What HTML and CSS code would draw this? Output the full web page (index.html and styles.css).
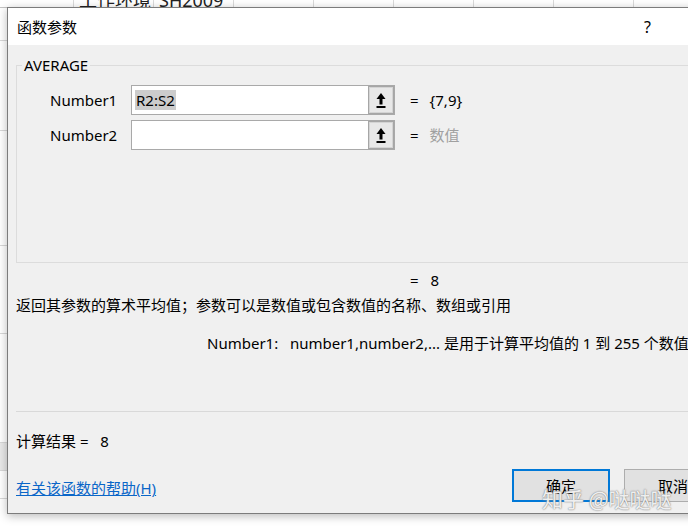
FILE: index.html
```html
<!DOCTYPE html>
<html lang="zh-CN">
<head>
<meta charset="utf-8">
<title>函数参数</title>
<link rel="stylesheet" href="styles.css">
</head>
<body>
<div class="sheet">
  <div class="row r0">
    <div class="cell first"></div>
    <div class="cell"><span class="celltext">工作环境</span></div>
    <div class="cell"><span class="celltext">SH2009</span></div>
    <div class="cell"></div>
    <div class="cell"></div>
    <div class="cell"></div>
    <div class="cell"></div>
    <div class="cell"></div>
    <div class="cell"></div>
  </div>
  <div class="row r1"></div>
  <div class="row r2"></div>
  <div class="row r3"></div>
  <div class="row r4"></div>
  <div class="row r5"></div>
  <div class="row r6"></div>
  <div class="row r7"></div>
  <div class="row r8"></div>
</div>

<div class="dialog">
  <div class="titlebar">
    <span class="title">函数参数</span>
    <span class="qmark">?</span>
  </div>
  <div class="dbody">
    <fieldset class="group">
      <legend class="legend">AVERAGE</legend>
      <div class="arg">
        <span class="label">Number1</span>
        <div class="field">
          <span class="text"><span class="sel">R2:S2</span></span>
          <span class="pick"><svg width="10" height="17" viewBox="0 0 10 17"><path d="M5 1 L9.5 7 H0.5 Z" fill="#000"/><rect x="3.5" y="6.5" width="3" height="6" fill="#000"/><rect x="0.5" y="14" width="9" height="2" fill="#000"/></svg></span>
        </div>
        <span class="eq">=</span>
        <span class="val">{7,9}</span>
      </div>
      <div class="arg">
        <span class="label">Number2</span>
        <div class="field">
          <span class="text"></span>
          <span class="pick"><svg width="10" height="17" viewBox="0 0 10 17"><path d="M5 1 L9.5 7 H0.5 Z" fill="#000"/><rect x="3.5" y="6.5" width="3" height="6" fill="#000"/><rect x="0.5" y="14" width="9" height="2" fill="#000"/></svg></span>
        </div>
        <span class="eq">=</span>
        <span class="val hint">数值</span>
      </div>
    </fieldset>
    <div class="fresult"><span>=</span><span class="num">8</span></div>
    <div class="desc">返回其参数的算术平均值；参数可以是数值或包含数值的名称、数组或引用</div>
    <div class="help">Number1:&nbsp;&nbsp;&nbsp;number1,number2,... 是用于计算平均值的 1 到 255 个数值或包含数值的名称、数组或引用</div>
    <div class="sep"></div>
    <div class="calc">计算结果 =&nbsp;&nbsp;&nbsp;8</div>
    <div class="footer">
      <a class="link" href="#">有关该函数的帮助(H)</a>
      <button class="btn ok">确定</button>
      <button class="btn cancel">取消</button>
    </div>
  </div>
</div>

<div class="watermark">知乎 @哒哒哒</div>
</body>
</html>
```

FILE: styles.css
```css
* { box-sizing: border-box; }

html, body {
  margin: 0;
  padding: 0;
  width: 688px;
  height: 530px;
  overflow: hidden;
  background: #ffffff;
  font-family: "Noto Sans", "Noto Sans CJK SC", sans-serif;
}

body { position: relative; }

/* background spreadsheet */
.sheet {
  display: flex;
  flex-direction: column;
  width: 688px;
}
.row {
  border-bottom: 1px solid #d8d8d8;
  width: 100%;
}
.r0 {
  display: flex;
  height: 8px;
  border-bottom-color: #c4c4c4;
}
.r1 { height: 33px; }
.r2 { height: 90px; }
.r3 { height: 115px; }
.r4 { height: 88px; }
.r5 { height: 109px; }
.r6 { height: 28px; background: #e9e9e9; }
.r7 { height: 28px; }
.r8 { height: 40px; border-bottom: none; }

.cell {
  flex: 0 0 80px;
  height: 7px;
  border-left: 1px solid #dadada;
  overflow: hidden;
  display: flex;
  align-items: flex-end;
  padding-left: 5px;
}
.cell.first {
  flex-basis: 73px;
  border-left: none;
}
.celltext {
  font-size: 18px;
  line-height: 20px;
  margin-bottom: -3px;
  color: #222;
  white-space: nowrap;
}

/* dialog */
.dialog {
  position: absolute;
  left: 7px;
  top: 7px;
  width: 720px;
  height: 507px;
  border: 1px solid #7c7c7c;
  background: #f0f0f0;
  box-shadow: 0 2px 9px rgba(0, 0, 0, 0.28);
  display: flex;
  flex-direction: column;
  font-size: 15px;
  line-height: 20px;
  color: #000;
}

.titlebar {
  height: 37px;
  flex: 0 0 37px;
  background: #ffffff;
  display: flex;
  align-items: center;
  padding-left: 9px;
}
.title {
  flex: 0 0 627px;
}
.qmark {
  font-size: 16px;
}

.dbody {
  display: flex;
  flex-direction: column;
  flex: 1;
}

.group {
  margin: 10px 0 0 8px;
  padding: 10px 0 112px 33px;
  border: 1px solid #dcdcdc;
  border-right: none;
  min-width: 0;
  display: flex;
  flex-direction: column;
  gap: 5px;
}
.legend {
  padding: 0 2px;
  margin-left: -28px;
  line-height: 20px;
}

.arg {
  display: grid;
  grid-template-columns: 81px 264px max-content max-content;
  justify-content: start;
  align-items: center;
}
.label { white-space: nowrap; }
.field {
  display: flex;
  height: 30px;
  border: 1px solid #a9a9a9;
  background: #ffffff;
}
.text {
  flex: 1;
  display: flex;
  align-items: center;
  padding-left: 3px;
}
.sel {
  background: #cccccc;
  padding: 0 1px;
  line-height: 20px;
}
.pick {
  width: 26px;
  flex: 0 0 26px;
  background: #e8e8e8;
  border: 1px solid #a6a6a6;
  box-shadow: inset 0 0 0 1px #d4d4d4;
  display: flex;
  align-items: center;
  justify-content: center;
}
.pick svg { display: block; }
.eq { margin-left: 15px; }
.val { margin-left: 11px; }
.hint { color: #a0a0a0; }

.fresult {
  margin-top: 7px;
  padding-left: 402px;
  display: flex;
}
.fresult .num { margin-left: 12px; }

.desc {
  margin-top: 5px;
  padding-left: 8px;
  white-space: nowrap;
}

.help {
  margin-top: 18px;
  padding-left: 199px;
  white-space: nowrap;
}

.sep {
  margin-top: 58px;
  margin-left: 8px;
  border-top: 1px solid #d9d9d9;
}

.calc {
  margin-top: 19px;
  padding-left: 8px;
}

.footer {
  margin-top: 18px;
  padding-left: 8px;
  display: flex;
  align-items: flex-start;
}
.link {
  flex: 0 0 496px;
  margin-top: 9px;
  color: #0a66c8;
  text-decoration: underline;
}
.btn {
  height: 33px;
  font-family: "Noto Sans CJK SC", sans-serif;
  font-size: 15px;
  background: #e1e1e1;
  color: #000;
  padding: 0;
}
.ok {
  width: 98px;
  border: 2px solid #0078d7;
}
.cancel {
  width: 98px;
  margin-left: 14px;
  border: 1px solid #adadad;
}

/* watermark overlay */
.watermark {
  position: absolute;
  left: 542px;
  top: 485px;
  font-family: "Noto Sans CJK SC", sans-serif;
  font-size: 21px;
  line-height: 26px;
  color: rgba(255, 255, 255, 0.9);
  text-shadow: 0 0 1px #7a7a7a, 0 0 2px #9a9a9a;
  white-space: nowrap;
}
```
